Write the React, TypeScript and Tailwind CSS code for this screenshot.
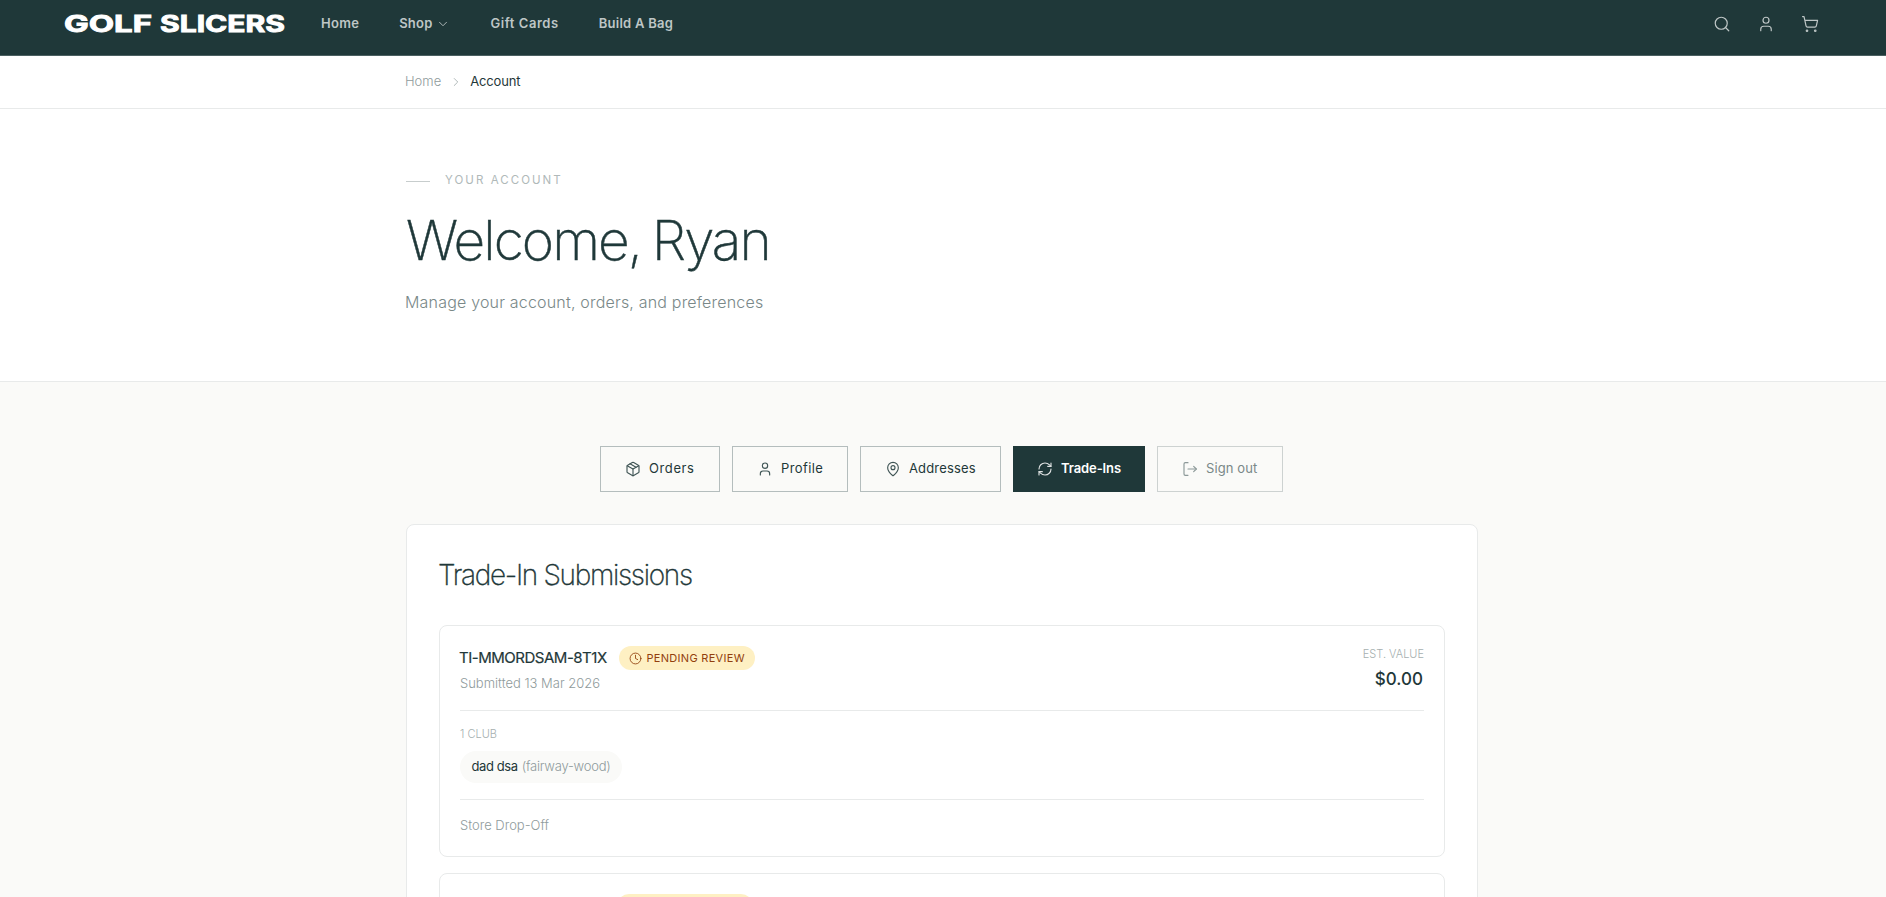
import { useState } from "react";
import type { ReactNode } from "react";
import { ChevronDown, ChevronRight, Clock, MapPin, Package, RefreshCw, Search, ShoppingCart, User } from "lucide-react";
import clsx from "clsx";

type TabId = "orders" | "profile" | "addresses" | "trade-ins" | "sign-out";

interface Submission {
  reference: string;
  referenceClass: string;
  submitted: string;
  value: string;
  clubs: { name: string; type: string }[];
  method: string;
}

const submissions: Submission[] = [
  {
    reference: "TI-MMORDSAM-8T1X",
    referenceClass: "w-[147px]",
    submitted: "13 Mar 2026",
    value: "$0.00",
    clubs: [{ name: "dad dsa", type: "fairway-wood" }],
    method: "Store Drop-Off",
  },
  {
    reference: "TI-MMORBKLE-4T7X",
    referenceClass: "w-[145px]",
    submitted: "13 Mar 2026",
    value: "$0.00",
    clubs: [{ name: "dad dsa", type: "fairway-wood" }],
    method: "Store Drop-Off",
  },
];

function SignOutIcon() {
  return (
    <svg
      className="size-4"
      viewBox="0 0 24 24"
      fill="none"
      stroke="currentColor"
      strokeWidth={1.7}
      strokeLinecap="round"
      strokeLinejoin="round"
    >
      <path d="M9 21.5H5a2 2 0 0 1-2-2v-15a2 2 0 0 1 2-2h4" />
      <path d="M17.5 8l4 4-4 4" />
      <path d="M21.5 12H9" />
    </svg>
  );
}

const tabs: { id: TabId; label: string; icon: ReactNode; className: string }[] = [
  { id: "orders", label: "Orders", icon: <Package size={16} strokeWidth={1.7} />, className: "w-[120px] pl-6 tracking-[0.6px]" },
  { id: "profile", label: "Profile", icon: <User size={16} strokeWidth={1.7} />, className: "w-[116px] pl-6 tracking-[0.4px]" },
  { id: "addresses", label: "Addresses", icon: <MapPin size={16} strokeWidth={1.7} />, className: "w-[141px] pl-6 tracking-[0.15px]" },
  { id: "trade-ins", label: "Trade-Ins", icon: <RefreshCw size={16} strokeWidth={1.7} />, className: "w-[132px] pl-[23px] tracking-[-0.1px]" },
  { id: "sign-out", label: "Sign out", icon: <SignOutIcon />, className: "w-[126px] pl-6 tracking-[0.1px]" },
];

function Logo() {
  return (
    <svg className="h-[56px] w-[222px]" viewBox="0 0 222 56" fill="#fff" stroke="#fff" strokeWidth={0.9}>
      <g className="font-['Inter'] font-bold" fontSize="22.5">
        <text x="0" y="31.7" textLength="88" lengthAdjust="spacingAndGlyphs">GOLF</text>
        <text x="96" y="31.7" textLength="125" lengthAdjust="spacingAndGlyphs">SLICERS</text>
      </g>
    </svg>
  );
}

function SiteHeader() {
  return (
    <header className="flex h-[56px] items-start border-b border-[#4b6061] bg-[#1f3839] pl-[64px] pr-[67px] text-[#bec6c6]">
      <div className="h-[55px] overflow-hidden">
        <Logo />
      </div>
      <nav className="ml-[35px] flex h-12 items-center gap-10 text-[13px] font-[560] tracking-[0.3px]">
        <a href="#">Home</a>
        <a href="#" className="flex items-center gap-1 tracking-[0.2px]">
          Shop
          <ChevronDown size={14} strokeWidth={1.5} />
        </a>
        <a href="#" className="tracking-[0.55px]">Gift Cards</a>
        <a href="#" className="tracking-[0.25px]">Build A Bag</a>
      </nav>
      <div className="ml-auto flex h-12 items-center gap-[26px]">
        <Search size={18} strokeWidth={1.6} />
        <User size={18} strokeWidth={1.6} />
        <ShoppingCart size={18} strokeWidth={1.6} />
      </div>
    </header>
  );
}

function SubmissionCard({ submission }: { submission: Submission }) {
  return (
    <article className="rounded-lg border border-[#e8eaea] p-5">
      <div className="flex h-12 justify-between">
        <div>
          <div className="flex items-center gap-3">
            <span
              className={clsx(
                "-ml-px text-[15px] leading-6 tracking-[-0.48px] whitespace-nowrap [-webkit-text-stroke:0.2px]",
                submission.referenceClass,
              )}
            >
              {submission.reference}
            </span>
            <span className="ml-px flex h-6 w-[136px] items-center gap-[5px] rounded-full bg-[#fef0c3] pl-[9.5px] text-[11px] leading-[22px] tracking-[0.3px] whitespace-nowrap text-[#92400e]">
              <Clock size={13} strokeWidth={1.6} className="shrink-0" />
              <span className="pb-px">PENDING REVIEW</span>
            </span>
          </div>
          <p className="mt-[3px] text-[13px] leading-5 font-light text-[#8f9b9c]">Submitted {submission.submitted}</p>
        </div>
        <div className="text-right">
          <p className="mt-px text-[11px] leading-[14px] font-light text-[#a5afaf]">EST. VALUE</p>
          <p className="mt-1 mr-px text-[17px] leading-7 font-medium">{submission.value}</p>
        </div>
      </div>
      <div className="mt-4 border-t border-[#e8eaea] pt-[15px] pb-4">
        <p className="text-[11px] leading-4 font-light text-[#a5afaf]">{submission.clubs.length} CLUB</p>
        <div className="mt-[9px] flex gap-2">
          {submission.clubs.map((club) => (
            <span
              key={club.name}
              className="flex h-8 w-[162px] items-center gap-1 rounded-full bg-[#fafaf8] pl-[11.5px] text-[13px] tracking-[-0.4px] whitespace-nowrap"
            >
              {club.name}
              <span className="font-light tracking-[-0.22px] text-[#8f9b9c]">({club.type})</span>
            </span>
          ))}
        </div>
      </div>
      <p className="border-t border-[#e8eaea] pt-[15px] pb-px text-[13px] leading-5 font-light text-[#8f9b9c]">{submission.method}</p>
    </article>
  );
}

export default function App() {
  const [active, setActive] = useState<TabId>("trade-ins");

  return (
    <div className="h-[897px] overflow-hidden bg-[#fafaf8] font-['Inter',sans-serif] text-[#1f3839]">
      <SiteHeader />

      <div className="border-b border-[#e8eaea] bg-white">
        <nav className="ml-[405px] flex h-[52px] items-center gap-2 text-[13px]">
          <a href="#" className="font-light text-[#8f9b9c]">Home</a>
          <ChevronRight size={14} strokeWidth={1.5} className="text-[#a5afaf]" />
          <span className="-ml-px tracking-[-0.15px]">Account</span>
        </nav>
      </div>

      <section className="border-b border-[#e8eaea] bg-white">
        <div className="ml-[406px] pt-[63px] pb-[65px]">
          <div className="flex h-4 items-center gap-[15px]">
            <span className="mt-[3px] h-px w-6 bg-[#c7cdcd]" />
            <span className="text-[11.5px] leading-4 tracking-[2.05px] text-[#b0b9b9]">YOUR ACCOUNT</span>
          </div>
          <h1 className="mt-[22px] text-[55px] leading-[60px] font-extralight tracking-[-1.9px] [word-spacing:-3px] [-webkit-text-stroke:0.5px]">
            Welcome, Ryan
          </h1>
          <p className="mt-[18px] -ml-px text-[16px] leading-7 font-light tracking-[0.19px] text-[#798888]">
            Manage your account, orders, and preferences
          </p>
        </div>
      </section>

      <main className="ml-[406px] w-[1072px] pt-16">
        <div className="ml-[194px] flex gap-3">
          {tabs.map((tab) => (
            <button
              key={tab.id}
              onClick={() => setActive(tab.id)}
              className={clsx(
                "flex h-[46px] shrink-0 items-center gap-2 border text-[13px] whitespace-nowrap",
                tab.className,
                tab.id === active
                  ? "border-[#1f3839] bg-[#1f3839] font-[560] text-white"
                  : tab.id === "sign-out"
                    ? "border-[#cdd2d1] text-[#798888]"
                    : "border-[#b4bdbd]",
              )}
            >
              <span className="shrink-0 opacity-85">{tab.icon}</span>
              {tab.label}
            </button>
          ))}
        </div>

        <div className="mt-8 rounded-lg border border-[#e8eaea] bg-white p-8">
          <h2 className="-ml-px pt-[2px] text-[28px] leading-[33px] font-extralight tracking-[-1.3px] [-webkit-text-stroke:0.35px]">
            Trade-In Submissions
          </h2>
          <div className="mt-[33px] flex flex-col gap-4">
            {submissions.map((submission) => (
              <SubmissionCard key={submission.reference} submission={submission} />
            ))}
          </div>
        </div>
      </main>
    </div>
  );
}
